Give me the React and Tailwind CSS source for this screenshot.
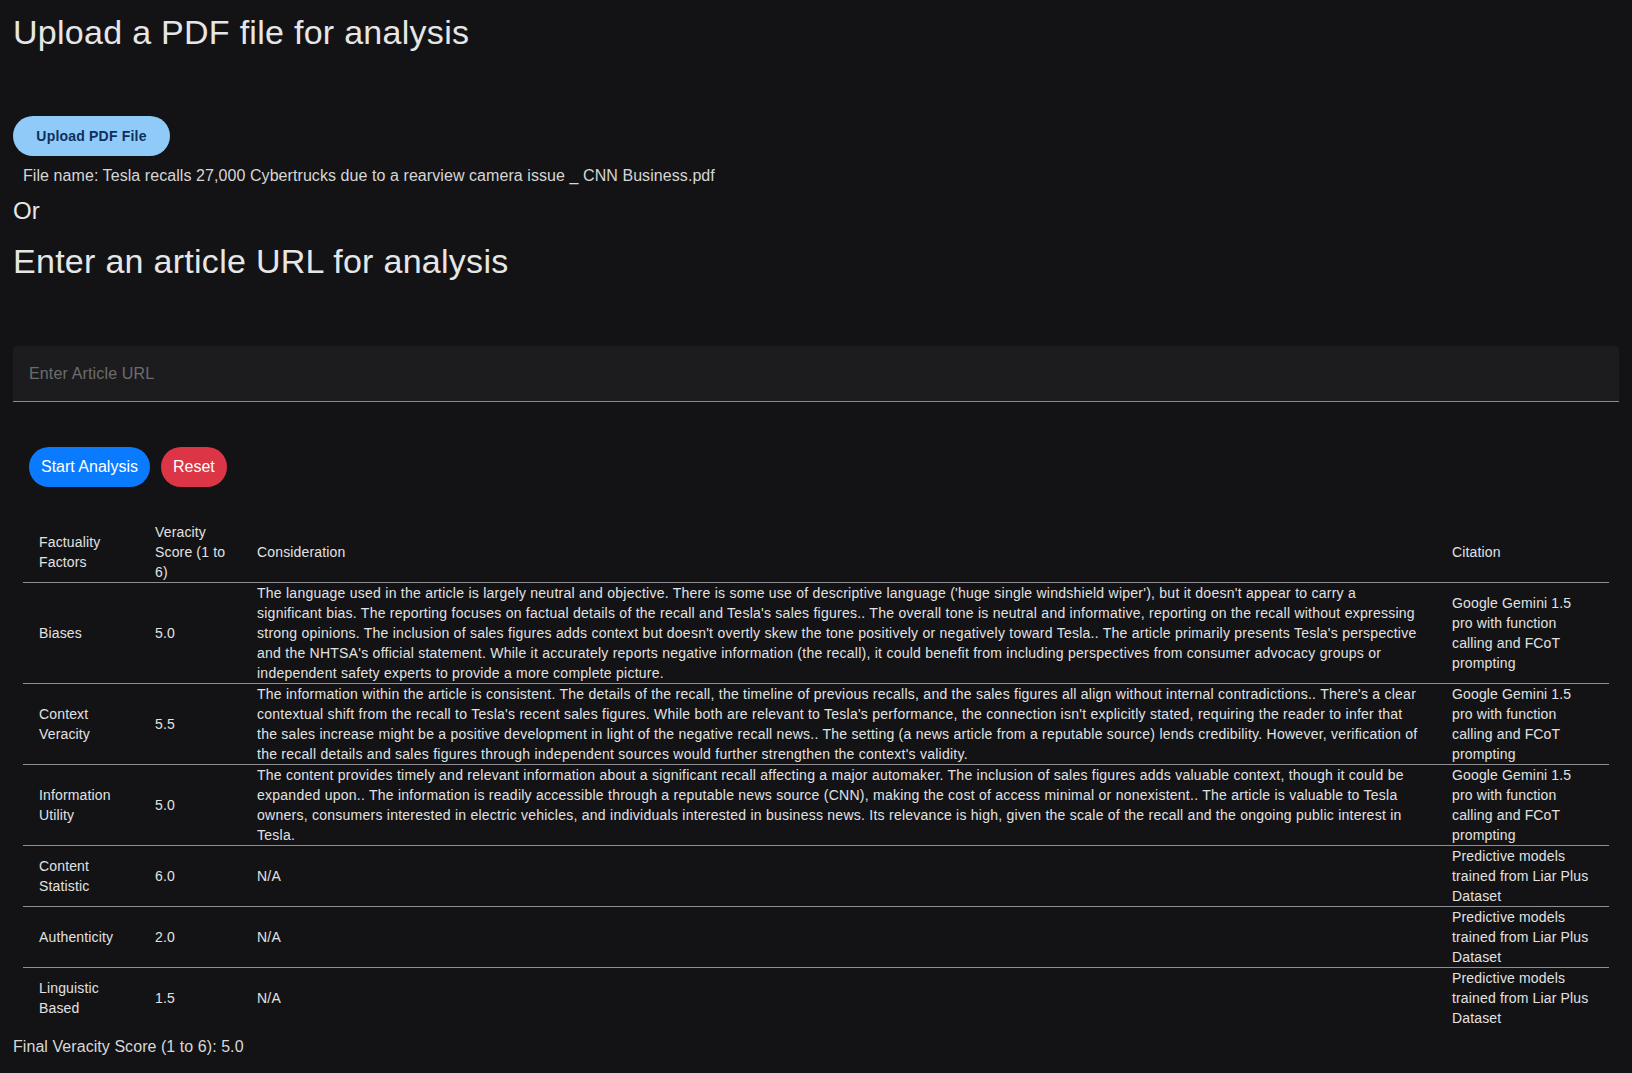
import React from 'react';

const rows = [
  {
    factor: 'Biases',
    score: '5.0',
    consideration:
      "The language used in the article is largely neutral and objective. There is some use of descriptive language ('huge single windshield wiper'), but it doesn't appear to carry a significant bias. The reporting focuses on factual details of the recall and Tesla's sales figures.. The overall tone is neutral and informative, reporting on the recall without expressing strong opinions. The inclusion of sales figures adds context but doesn't overtly skew the tone positively or negatively toward Tesla.. The article primarily presents Tesla's perspective and the NHTSA's official statement. While it accurately reports negative information (the recall), it could benefit from including perspectives from consumer advocacy groups or independent safety experts to provide a more complete picture.",
    citation: 'Google Gemini 1.5 pro with function calling and FCoT prompting',
  },
  {
    factor: 'Context Veracity',
    score: '5.5',
    consideration:
      "The information within the article is consistent. The details of the recall, the timeline of previous recalls, and the sales figures all align without internal contradictions.. There's a clear contextual shift from the recall to Tesla's recent sales figures. While both are relevant to Tesla's performance, the connection isn't explicitly stated, requiring the reader to infer that the sales increase might be a positive development in light of the negative recall news.. The setting (a news article from a reputable source) lends credibility. However, verification of the recall details and sales figures through independent sources would further strengthen the context's validity.",
    citation: 'Google Gemini 1.5 pro with function calling and FCoT prompting',
  },
  {
    factor: 'Information Utility',
    score: '5.0',
    consideration:
      'The content provides timely and relevant information about a significant recall affecting a major automaker. The inclusion of sales figures adds valuable context, though it could be expanded upon.. The information is readily accessible through a reputable news source (CNN), making the cost of access minimal or nonexistent.. The article is valuable to Tesla owners, consumers interested in electric vehicles, and individuals interested in business news. Its relevance is high, given the scale of the recall and the ongoing public interest in Tesla.',
    citation: 'Google Gemini 1.5 pro with function calling and FCoT prompting',
  },
  {
    factor: 'Content Statistic',
    score: '6.0',
    consideration: 'N/A',
    citation: 'Predictive models trained from Liar Plus Dataset',
  },
  {
    factor: 'Authenticity',
    score: '2.0',
    consideration: 'N/A',
    citation: 'Predictive models trained from Liar Plus Dataset',
  },
  {
    factor: 'Linguistic Based',
    score: '1.5',
    consideration: 'N/A',
    citation: 'Predictive models trained from Liar Plus Dataset',
  },
];

const cell = 'pl-4 pr-4 py-0 align-middle text-left font-normal';
const scoreCell = 'pl-4 pr-3 py-0 align-middle text-left font-normal';
const textCell = 'pl-4 pr-4 py-0 align-middle text-left font-normal tracking-[0.25px]';

export default function App() {
  return (
    <div className="min-h-screen bg-[#131315] px-[13px] pt-[11px] pb-4 text-[#e6e6e6] font-['Liberation_Sans',Arial,sans-serif]">
      <h1 className="text-[34px] leading-[42px] font-normal tracking-[0.28px]">Upload a PDF file for analysis</h1>

      <button className="mt-[63px] h-10 w-[157px] rounded-full bg-[#90caf9] text-[14px] font-bold text-[#0f2f5c] tracking-[0.2px]">
        Upload PDF File
      </button>

      <p className="mt-2 ml-[10px] text-base leading-6 tracking-[0.07px] text-[#d6d6d6]">
        File name: Tesla recalls 27,000 Cybertrucks due to a rearview camera issue _ CNN Business.pdf
      </p>

      <p className="mt-[5px] text-[24px] leading-[36px]">Or</p>

      <h2 className="mt-[11px] text-[34px] leading-[42px] font-normal tracking-[0.28px]">Enter an article URL for analysis</h2>

      <div className="mt-16 h-14 rounded-t bg-[#1c1c1e] border-b border-[#8a8a8a] flex items-center">
        <input
          type="text"
          placeholder="Enter Article URL"
          className="w-full bg-transparent pl-4 pr-3 text-base tracking-[0.15px] text-[#e6e6e6] outline-none placeholder:text-[#6c6c6e]"
        />
      </div>

      <div className="mt-[45px] ml-4 flex gap-[11px]">
        <button className="h-10 rounded-full bg-[#0a7bff] px-3 text-base text-white">Start Analysis</button>
        <button className="h-10 rounded-full bg-[#dc3545] px-3 text-base text-white">Reset</button>
      </div>

      <table className="mt-[35px] ml-[10px] w-[1586px] table-fixed border-collapse text-[14px] leading-5 tracking-[0.15px] text-[#e2e2e2]">
        <colgroup>
          <col className="w-[116px]" />
          <col className="w-[102px]" />
          <col className="w-[1195px]" />
          <col className="w-[173px]" />
        </colgroup>
        <thead>
          <tr className="border-b border-[#8e8e93]">
            <th className={cell}>Factuality Factors</th>
            <th className={scoreCell}>Veracity Score (1 to 6)</th>
            <th className={cell}>Consideration</th>
            <th className={cell}>Citation</th>
          </tr>
        </thead>
        <tbody>
          {rows.map((r, i) => (
            <tr key={r.factor} className={i < rows.length - 1 ? 'border-b border-[#8e8e93]' : ''}>
              <td className={cell}>{r.factor}</td>
              <td className={scoreCell}>{r.score}</td>
              <td className={textCell}>{r.consideration}</td>
              <td className={cell}>{r.citation}</td>
            </tr>
          ))}
        </tbody>
      </table>

      <p className="mt-[7px] text-base leading-6 tracking-[0.06px] text-[#d8d8d8]">Final Veracity Score (1 to 6): 5.0</p>
    </div>
  );
}
